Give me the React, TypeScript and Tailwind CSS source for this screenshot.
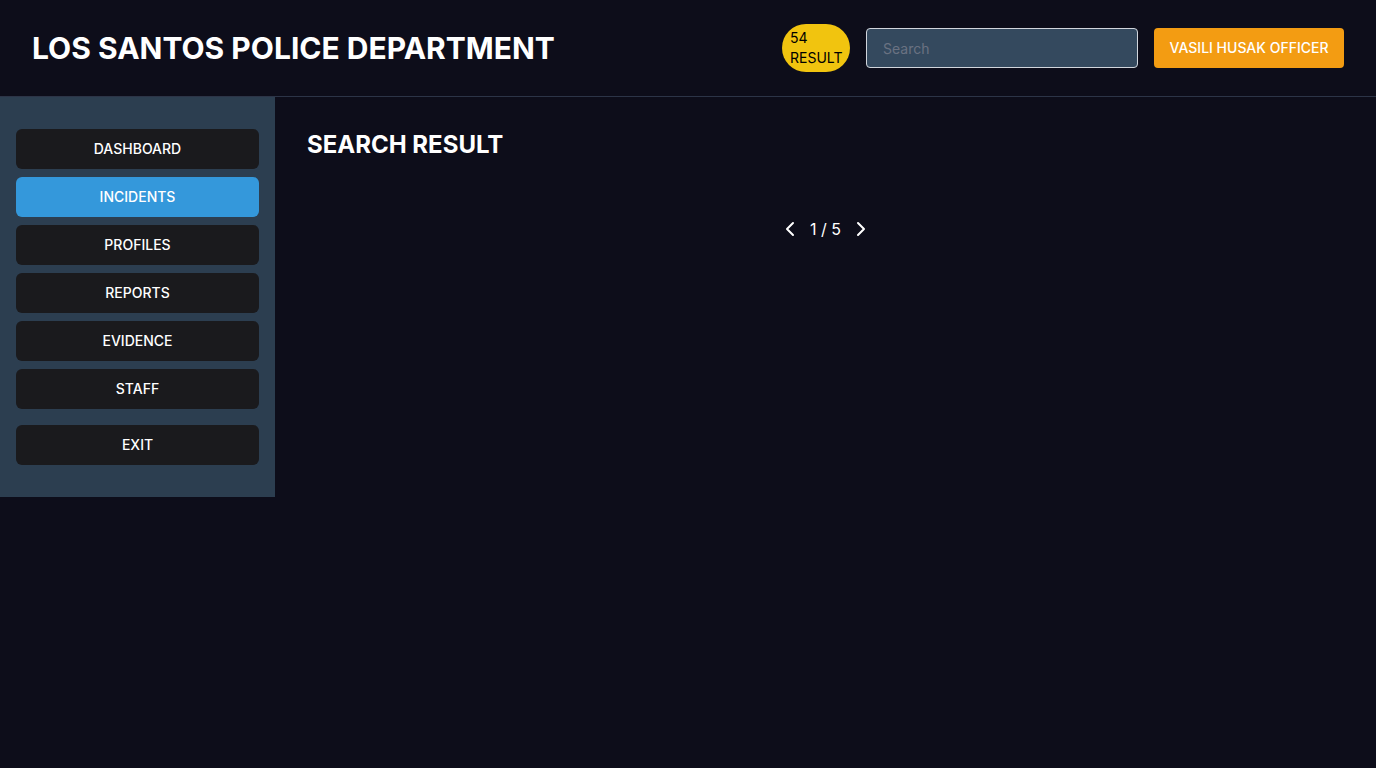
import { ChevronLeft, ChevronRight } from 'lucide-react';

const NAV = ['DASHBOARD', 'INCIDENTS', 'PROFILES', 'REPORTS', 'EVIDENCE', 'STAFF'];

function NavButton({ label, active }: { label: string; active?: boolean }) {
  return (
    <button
      className={`flex h-10 w-full items-center justify-center rounded-md text-sm font-medium text-white ${
        active ? 'bg-[#3498db]' : 'bg-[#1a1a1d]'
      }`}
    >
      {label}
    </button>
  );
}

export default function App() {
  return (
    <div className="min-h-screen bg-[#0d0d1a] text-white" style={{ fontFamily: 'Inter, "Noto Sans", sans-serif' }}>
      <header className="flex h-[97px] items-center justify-between border-b border-[#2c3447] px-8">
        <h1 className="text-[30px] font-bold">LOS SANTOS POLICE DEPARTMENT</h1>
        <div className="flex items-center gap-4">
          <div className="flex h-12 w-[68px] items-center rounded-3xl bg-[#f1c40f] px-2 text-sm leading-5 text-black">
            54 RESULT
          </div>
          <input
            placeholder="Search"
            className="h-10 w-[272px] rounded border border-gray-300 bg-[#34495e] px-4 text-sm text-white placeholder:text-gray-500 outline-none"
          />
          <button className="h-10 w-[190px] rounded bg-[#f39c12] text-sm font-medium text-white">VASILI HUSAK OFFICER</button>
        </div>
      </header>

      <div className="flex items-start">
        <aside className="flex w-[275px] flex-col gap-2 bg-[#2c3e50] px-4 pb-8 pt-8">
          {NAV.map((n) => (
            <NavButton key={n} label={n} active={n === 'INCIDENTS'} />
          ))}
          <div className="mt-2">
            <NavButton label="EXIT" />
          </div>
        </aside>

        <main className="flex-1 p-8">
          <h2 className="text-2xl font-bold">SEARCH RESULT</h2>
          <div className="mt-14 flex h-6 items-center justify-center gap-2">
            <ChevronLeft size={24} strokeWidth={2} />
            <span className="text-base">1 / 5</span>
            <ChevronRight size={24} strokeWidth={2} />
          </div>
        </main>
      </div>
    </div>
  );
}
